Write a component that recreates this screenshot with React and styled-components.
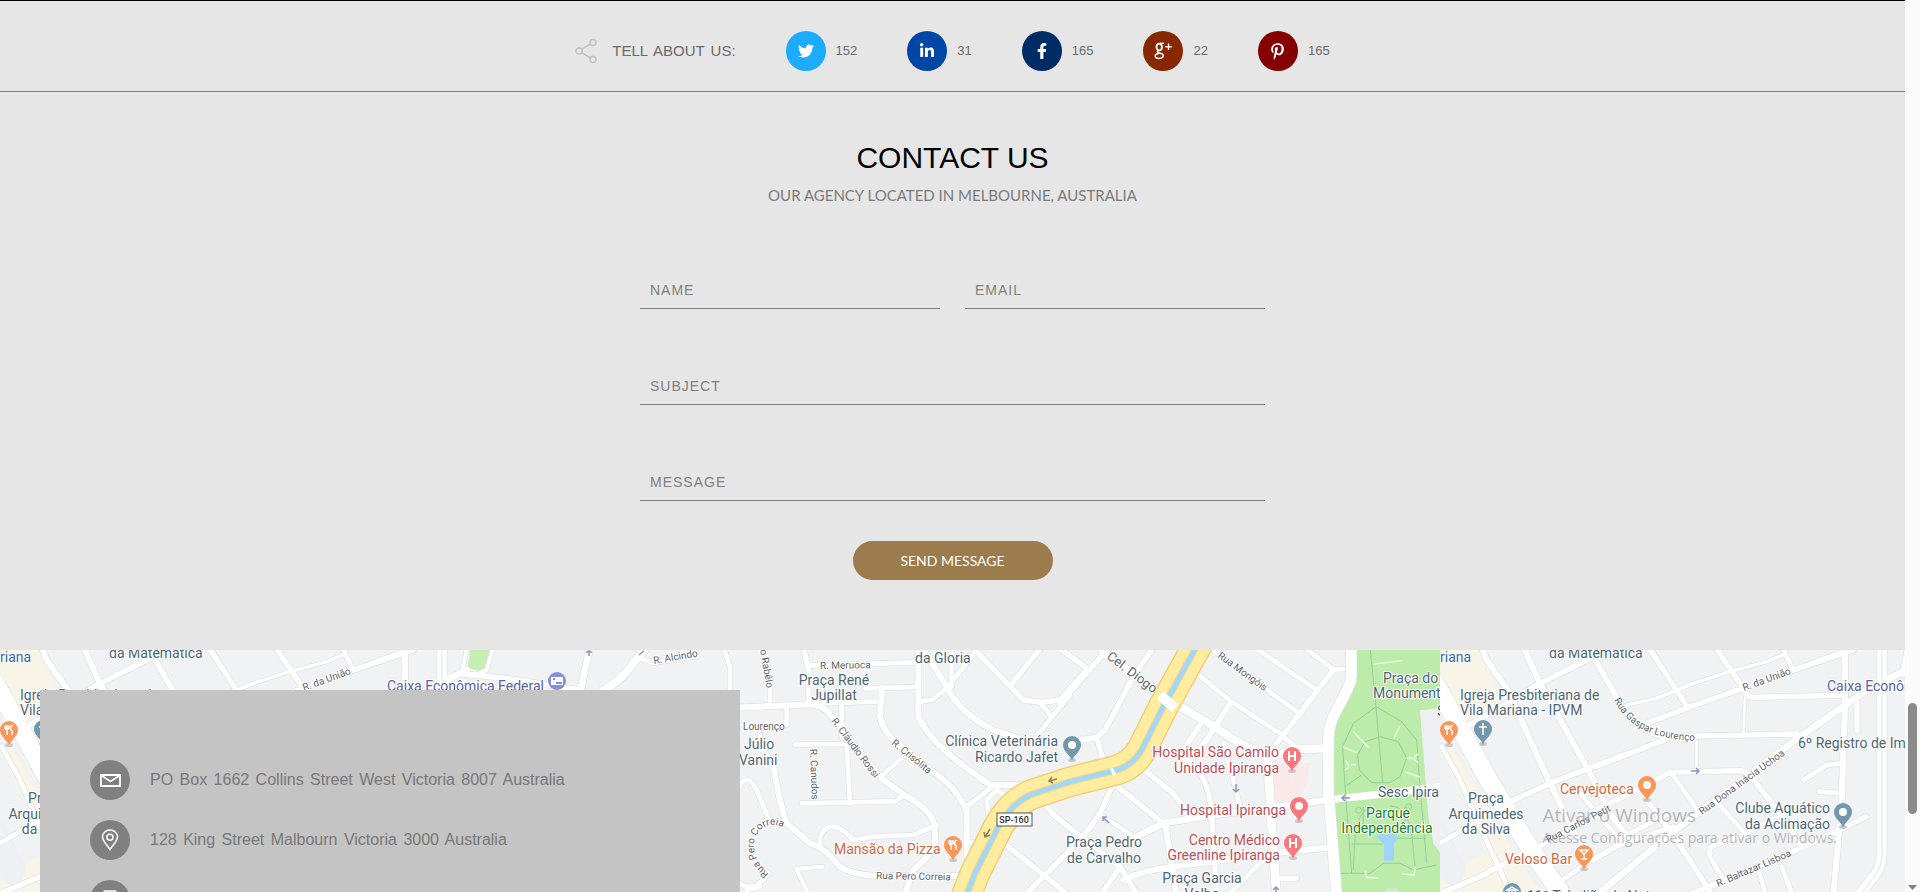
import React, { useId } from "react";
import styled, { createGlobalStyle } from "styled-components";
import { FaTwitter, FaLinkedinIn, FaFacebookF, FaPinterestP } from "react-icons/fa";

const GlobalStyle = createGlobalStyle`
  *, *::before, *::after { box-sizing: border-box; }
  body {
    margin: 0;
    background: #e6e6e6;
    color: #6b6b6b;
    font-family: "Liberation Sans", Arial, sans-serif;
  }
`;

const Shell = styled.div`
  display: flex;
  height: 100vh;
  overflow: hidden;
`;

const Page = styled.main`
  flex: 1;
  min-width: 0;
  display: flex;
  flex-direction: column;
`;

/* Share bar */

const ShareBar = styled.section`
  display: flex;
  flex: none;
  justify-content: center;
  align-items: center;
  gap: 50px;
  padding: 30px 0 20px;
  border-top: 1px solid #000;
  border-bottom: 1px solid #7d7d7d;
`;

const ShareTitle = styled.div`
  display: flex;
  align-items: center;
  gap: 15px;
  font-size: 15px;
  line-height: 20px;
  word-spacing: 2px;
`;

const ShareLink = styled.a`
  display: flex;
  align-items: center;
  gap: 10px;
  color: #6b6b6b;
  font-size: 13px;
  line-height: 20px;
  text-decoration: none;
`;

const Disc = styled.span`
  display: flex;
  flex: none;
  align-items: center;
  justify-content: center;
  width: 40px;
  height: 40px;
  border-radius: 50%;
  background: ${(p) => p.$color};
  color: #fff;
`;

/* Contact form */

const Contact = styled.section`
  display: flex;
  flex: none;
  flex-direction: column;
  align-items: center;
  padding: 48px 20px 70px;
`;

const Title = styled.h2`
  margin: 0;
  color: #000;
  font-size: 30px;
  font-weight: 400;
  line-height: 36px;
`;

const Subtitle = styled.p`
  margin: 9px 0 68px;
  color: #7b7b7b;
  font-family: "Gill Sans", "Gill Sans MT", Lato, sans-serif;
  font-size: 15px;
  line-height: 20px;
`;

const Form = styled.form`
  display: grid;
  grid-template-columns: 1fr 1fr;
  column-gap: 25px;
  row-gap: 60px;
  width: 100%;
  max-width: 625px;
`;

const Field = styled.input`
  grid-column: ${(p) => (p.$wide ? "1 / -1" : "auto")};
  width: 100%;
  height: 36px;
  padding: 8px 10px 9px;
  border: 0;
  border-bottom: 1px solid #7d7d7d;
  border-radius: 0;
  outline: 0;
  background: transparent;
  color: #333;
  font-family: inherit;
  font-size: 14px;
  letter-spacing: 1px;
  line-height: 18px;
  resize: none;
  overflow: hidden;
  &::placeholder {
    color: #808080;
    opacity: 1;
  }
`;

const SendButton = styled.button`
  grid-column: 1 / -1;
  justify-self: center;
  width: 200px;
  height: 39px;
  margin-top: -20px;
  border: 0;
  border-radius: 20px;
  background: #9c7c4c;
  color: #fff;
  font-family: "Gill Sans", "Gill Sans MT", Lato, sans-serif;
  font-size: 14px;
  line-height: 20px;
  cursor: pointer;
`;

/* Map and address card */

const MapSection = styled.section`
  position: relative;
  flex: 1;
  min-height: 0;
  overflow: hidden;
  padding: 40px;
`;

const MapLayer = styled.div`
  position: absolute;
  inset: 0;
  display: flex;
  overflow: hidden;
`;

const TileSvg = styled.svg`
  display: block;
  flex: none;
  background: #f0f2f4;
  font-family: Roboto, sans-serif;
`;

const AddressCard = styled.address`
  position: relative;
  display: flex;
  flex-direction: column;
  gap: 20px;
  width: 700px;
  max-width: 100%;
  padding: 70px 50px;
  background: #c4c4c4;
  font-style: normal;
`;

const AddressRow = styled.div`
  display: flex;
  align-items: center;
  gap: 20px;
  color: #787878;
  font-size: 16px;
  line-height: 20px;
  word-spacing: 2px;
`;

const Watermark = styled.div`
  position: absolute;
  right: 68px;
  bottom: 44px;
  color: rgba(130, 130, 130, 0.55);
  font-family: "Segoe UI", "Open Sans", sans-serif;
  font-size: 14px;
  line-height: 20px;
  pointer-events: none;
`;

const WatermarkTitle = styled.div`
  font-size: 19px;
  line-height: 26px;
`;

/* Scroll track */

const Track = styled.div`
  flex: none;
  display: grid;
  grid-template-rows: 703fr 111fr 71fr 7px;
  justify-items: center;
  width: 15px;
  background: #fbfbfb;
`;

const Thumb = styled.div`
  grid-row: 2;
  width: 9px;
  border-radius: 5px;
  background: #8b8b8b;
`;

const TrackArrow = styled.svg`
  grid-row: 4;
`;

const ShareIcon = () => (
  <svg width="22" height="26" viewBox="0 0 22 26" fill="none" stroke="#c2c2c2" strokeWidth="1.500" aria-hidden="true">
    <circle cx="4" cy="13" r="3" />
    <circle cx="18" cy="4.500" r="3" />
    <circle cx="18" cy="21.500" r="3" />
    <path d="M6.600 11.400 15.400 6M6.600 14.600 15.400 20" />
  </svg>
);

const GooglePlusIcon = () => (
  <svg width="18" height="18" viewBox="0 0 18 18" fill="none" stroke="#fff" aria-hidden="true">
    <ellipse cx="5.200" cy="5" rx="2.700" ry="3.400" strokeWidth="1.800" />
    <path d="M6 1.300H10" strokeWidth="1.400" />
    <path d="M4.500 8.500C2.700 9.500 3.200 10.600 5.200 11C8.300 11.600 9.300 12.400 9.200 13.800C9.100 15.500 7.500 16.400 5 16.400C2.500 16.400 1.200 15.500 1.200 14C1.200 12.600 2.600 11.700 4.600 11.400" strokeWidth="1.500" />
    <path d="M14.500 1.500V8M11.300 4.700H17.700" strokeWidth="1.400" />
  </svg>
);

const MailIcon = () => (
  <svg width="21" height="13" viewBox="0 0 21 13" fill="none" stroke="#fff" strokeWidth="1.800" aria-hidden="true">
    <path d="M1 1H20V12H1ZM1.500 1.500 10.500 7.500 19.500 1.500" />
  </svg>
);

const PlaceIcon = () => (
  <svg width="18" height="22" viewBox="0 0 18 22" fill="none" stroke="#fff" strokeWidth="1.500" aria-hidden="true">
    <path d="M9 20.500C6 15.500 1.500 12 1.500 8A7.500 7 0 0 1 16.500 8C16.500 12 12 15.500 9 20.500Z" />
    <circle cx="9" cy="8.300" r="3" />
  </svg>
);

const PhoneIcon = () => (
  <svg width="14" height="20" viewBox="0 0 14 20" fill="none" stroke="#fff" strokeWidth="1.600" aria-hidden="true">
    <rect x="1" y="1" width="12" height="18" rx="1" />
    <path d="M1 15H13" />
  </svg>
);

/* Street geometry is plotted on a grid three times finer than the tile;
   each district carries its own origin and a list of [stroke width, path]. */

const districts = [
  {
    origin: -120,
    roads: [
      [55, "M340 120 440 300 500 410 620 610 730 770"],
      [18, "M485 20 500 60 560 145 690 430 770 590"],
      [18, "M610 20 660 130 810 400 870 520 930 600"],
      [16, "M820 50 900 190"],
      [16, "M440 260 560 190 660 130 800 60 850 30"],
      [16, "M560 490 690 430 910 345"],
      [14, "M350 615 480 540 560 490"],
      [14, "M365 320 420 420 480 560 540 690 575 770"],
      [16, "M350 765 480 710 610 640"],
      [14, "M620 640 750 570 850 520"],
      [14, "M720 725 800 670 920 600"],
    ],
  },
  {
    origin: 160,
    roads: [
      [16, "M-20 50 50 170C80 230 140 290 210 290L590 282"],
      [16, "M-10 378 200 298"],
      [16, "M145 20 265 205"],
      [16, "M345 20 430 145Q438 170 460 172L730 166"],
      [14, "M545 20 580 90"],
      [10, "M80 195 170 175 280 130 390 95 500 65 560 40"],
      [16, "M140 250 270 200 430 145 580 90 760 30"],
      [18, "M735 20V200L725 480 700 770"],
      [20, "M-10 765 220 575 400 440 600 290 800 150 920 90"],
      [8, "M435 170 431 278"],
      [16, "M771 188V272"],
      [8, "M290 305V390"],
      [16, "M-30 520 120 445 210 397 420 392Q445 396 455 412L540 520 600 610"],
      [14, "M-60 460 60 600 70 590 200 525"],
      [16, "M140 480 220 585 340 770"],
      [14, "M215 400 300 520M355 490 430 575"],
      [16, "M200 790 340 735 600 625 720 570 798 530"],
      [14, "M370 720 330 650Q322 625 345 615L430 585 550 520"],
      [14, "M-20 660 70 610 220 560"],
      [14, "M612 420 680 375 722 370M657 455 715 459"],
      [14, "M545 680 580 770M475 690 500 770"],
      [30, "M845 20V640Q845 680 825 705L770 775"],
    ],
  },
  {
    origin: 380,
    roads: [
      [14, "M-20 68 110 20M72 40V150"],
      [12, "M262 20 245 100 275 110 320 90 340 20"],
      [16, "M240 100 400 118 600 150"],
      [20, "M630 20 600 160"],
      [24, "M800 20 740 95Q710 130 670 150"],
      [14, "M780 55 820 68 940 50"],
      [14, "M1030 20 1050 80V160"],
    ],
  },
  {
    origin: 740,
    roads: [
      [18, "M-20 203 220 193Q260 200 290 250L420 412 500 470Q585 515 585 570V610Q580 640 520 690L492 770"],
      [14, "M90 130V200M140 200V255M60 285V325"],
      [16, "M190 20 208 100 205 190"],
      [14, "M205 77 530 67M375 145 530 141M220 190 410 185"],
      [18, "M425 145V190Q405 230 450 290L570 390Q640 430 680 510V680"],
      [18, "M535 20V230Q560 290 660 370L750 435 870 435"],
      [14, "M305 190V290M320 312 330 490M165 314 325 312M185 490 465 484 485 470M420 412 490 350"],
      [14, "M535 185 575 180 620 145 710 30M635 20V140"],
      [18, "M545 20 620 140Q660 220 760 270L880 310"],
      [16, "M695 20 850 180 905 187 960 180 1040 90M905 20 810 138"],
      [14, "M900 187 930 225M990 165 880 300"],
      [18, "M60 320 100 370Q115 480 140 550L210 610Q250 620 290 670 320 705 420 708L650 708"],
      [14, "M-15 470Q15 380 50 450L90 545M-15 720Q40 770 85 700M20 750 60 740"],
      [14, "M240 620Q235 560 285 560 300 560 340 600L400 590 520 585 590 555"],
      [12, "M168 686 248 680M168 686 210 770"],
      [14, "M680 500 760 438M745 520 740 480 770 450 830 490M690 606 720 606"],
      [16, "M780 600 930 720 990 770M910 480Q920 510 990 565"],
    ],
  },
  {
    origin: 1060,
    roads: [
      [24, "M130 35 300 165 430 240 540 310 630 350"],
      [16, "M0 25 80 85M150 20 0 190M280 20 215 120 135 270 110 292 60 300M110 290 132 370"],
      [14, "M405 95 510 182 660 280 710 325M460 30 710 215"],
      [14, "M580 20 770 150M730 20 820 88 850 87"],
      [16, "M820 90 650 310M510 190 440 300 400 350M420 255 370 330"],
      [16, "M290 310 400 370Q450 430 455 520L470 770"],
      [16, "M240 380 340 460 370 500M160 430 310 550M160 430 120 520 70 590-100 760"],
      [16, "M-20 525 180 680 235 770M180 680 120 770"],
      [20, "M220 595 310 550 460 525 620 505 800 480"],
      [18, "M315 550 350 770M190 720Q250 690 340 680L640 640 810 622"],
      [26, "M622 340 635 560 650 770"],
      [24, "M640 350 700 328 800 325"],
      [32, "M874 20V110Q870 140 835 200 805 250 805 300V450L830 770"],
      [14, "M500 770 610 660M650 715H710M492 310 540 500M130 530 230 595"],
    ],
  },
];

const place = (origin) => `translate(${origin} -10) scale(0.33333)`;

const highway = "M-290 790-255 700-200 590Q-160 500-90 465L30 425 160 393Q215 380 245 330L310 200 415 10";

const areaLabels = [
  ["riana", 0, 12, "start", "#3a66b0"],
  ["da Matemática", 109, 8],
  ["Igreja Presbiteriana de", 20, 50],
  ["Vila Mariana - IPVM", 20, 65],
  ["Praça", 46, 153, "middle"],
  ["Arquimedes", 46, 169, "middle"],
  ["da Silva", 46, 184, "middle"],
  ["Cervejoteca", 120, 144, "start", "#d0683c"],
  ["Veloso Bar", 65, 214, "start", "#d0683c"],
  ["11º Tabelião de Notas", 87, 251],
  ["Caixa Econômica Federal", 387, 41, "start", "#5961a8"],
  ["6º Registro de Imóveis", 358, 98],
  ["Clube Aquático", 390, 163, "end"],
  ["da Aclimação", 390, 179, "end"],
  ["Praça René", 834, 35, "middle"],
  ["Jupillat", 834, 50, "middle"],
  ["da Gloria", 915, 13],
  ["Júlio", 744, 99],
  ["Vanini", 739, 115],
  ["Clínica Veterinária", 1058, 96, "end"],
  ["Ricardo Jafet", 1058, 112, "end"],
  ["Mansão da Pizza", 834, 204, "start", "#d0683c"],
  ["Hospital São Camilo", 1279, 107, "end", "#bc4d55"],
  ["Unidade Ipiranga", 1279, 123, "end", "#bc4d55"],
  ["Hospital Ipiranga", 1286, 165, "end", "#bc4d55"],
  ["Centro Médico", 1280, 195, "end", "#bc4d55"],
  ["Greenline Ipiranga", 1280, 210, "end", "#bc4d55"],
  ["Praça Pedro", 1104, 197, "middle"],
  ["de Carvalho", 1104, 213, "middle"],
  ["Praça Garcia", 1202, 233, "middle"],
  ["Velho", 1202, 249, "middle"],
  ["Praça do", 1383, 33],
  ["Monumento", 1373, 48],
  ["S", 1437, 66],
  ["Sesc Ipiranga", 1378, 147],
  ["Parque", 1388, 168, "middle", "#17811d"],
  ["Independência", 1387, 183, "middle", "#17811d"],
];

const streetLabels = [
  ["R. da União", 304, 41, -20],
  ["Rua Dona Inácia Uchoa", 262, 165, -36],
  ["R. Baltazar Lisboa", 278, 237, -23],
  ["Rua Carlos Petit", 108, 193, -27],
  ["R. Alcindo", 654, 14, -10],
  ["o Rabêlo", 760, 0, 80],
  ["R. Meruoca", 820, 19, -1],
  ["Lourenço", 743, 80, 0],
  ["R. Cláudio Rossi", 831, 71, 53],
  ["R. Crisólita", 891, 94, 39],
  ["R. Canudos", 810, 99, 88],
  ["Rua Pero Correia", 876, 229, 1],
  ["Rua Mongóis", 1217, 7, 36],
];

const pins = [
  [9, 80, "#fb9658", "fork"],
  [43, 79, "#7398ac", "cross"],
  [144, 204, "#fb9658", "glass"],
  [72, 242, "#7398ac", "hall"],
  [207, 135, "#fb9658", "dot"],
  [403, 162, "#7398ac", "dot"],
  [1072, 95, "#7398ac", "dot"],
  [953, 195, "#fb9658", "fork"],
  [1292, 106, "#f8787c", "ward"],
  [1299, 156, "#f8787c", "dot"],
  [1293, 193, "#f8787c", "ward"],
];

const pinMarks = {
  dot: <circle r="4" fill="#fff" stroke="none" />,
  fork: <path d="M-4-5V-1M-2-5V-1M0-5V-1M-4-1H0M-2-1V5M4-5C1-4 1 0 3 1V5" />,
  cross: <path d="M0-6V6M-4-2H4" />,
  glass: <path d="M-4-4H4L0 0ZM0 0V5M-3 5H3" />,
  hall: <path d="M-5-2H5L0-5ZM-3-1V3M0-1V3M3-1V3" />,
  ward: <path d="M-3-5V5M3-5V5M-3 0H3" strokeWidth="2" />,
};

function Pin({ x, y, color, mark }) {
  return (
    <g transform={`translate(${x} ${y})`}>
      <ellipse cy="15" rx="4" ry="2" fill="#c9c9c9" />
      <path d="M0 16C-1 10-9 7-9 0A9 9 0 0 1 9 0C9 7 1 10 0 16Z" fill={color} />
      <g fill="none" stroke="#fff" strokeWidth="1.500">{pinMarks[mark]}</g>
    </g>
  );
}

function MapTile() {
  const id = useId();
  const halo = { stroke: "#fff", strokeWidth: 2, strokeLinejoin: "round", paintOrder: "stroke" };
  return (
    <TileSvg width="1440" height="640" viewBox="0 0 1440 640" aria-hidden="true">
      <defs>
        <path id={`${id}a`} d="M174 50C186 74 208 90 262 91" />
        <path id={`${id}b`} d="M769 224C750 208 751 188 761 179C769 173 779 173 790 182" />
      </defs>
      <g transform={place(-120)} fill="#f8f4e8">
        <path d="M360 30H482L500 90 520 110 535 180 450 260 360 110Z" />
        <path d="M370 340 390 315 480 460 590 650 670 770H360V700L500 640 470 550 360 330Z" />
      </g>
      <path d="M0 163V228L18 240 26 217Z" fill="#eef0f4" />
      <path d="M470 0H490L484 22 468 18Z" fill="#c6edb4" />
      <path d="M1271 113H1310L1306 135 1299 149 1273 153Z" fill="#fae9e9" />
      <g transform={place(1320)}>
        <path d="M360 200 300 210 315 400 330 600 360 640Z" fill="#eeeff2" />
        <path d="M110 20V130L45 260 35 450 50 770H362V640L340 610 325 530 315 400 300 210 362 205V20Z" fill="#bcebaa" />
        <path d="M35 478 190 462 362 440" fill="none" stroke="#fff" strokeWidth="22" />
        <g fill="none" stroke="#94cf9b" strokeWidth="3">
          <path d="M150 20 168 200 188 430M168 200 100 250 68 320 75 440 95 700M168 200 245 245 290 300 300 440 320 670" />
          <path d="M180 290 235 305 260 355 240 410 210 428H155L118 390 113 345 135 305ZM75 440 125 405" />
          <path d="M155 500C100 520 105 600 100 690M210 498C280 500 275 600 285 680M130 500V570M255 500V570M95 612H190M230 595H320M60 700 150 700 190 670H240L280 690 350 675" />
          <circle cx="116" cy="511" r="9" />
          <circle cx="266" cy="500" r="9" />
        </g>
        <g fill="none" stroke="#e4f7dc" strokeWidth="5">
          <path d="M100 275 145 322M240 258 222 295M68 320 110 338M255 395 300 412M75 360Q95 380 75 390M92 374H108M295 342Q270 355 295 368M260 355H278M160 72 248 62M135 690 140 712 175 714M285 680 282 705 245 702" />
        </g>
        <path d="M168 590Q200 570 236 590L222 612V662H192V612Z" fill="#a2d4fb" />
        <path d="M200 745H235V765H200Z" fill="#d8e7cf" />
      </g>
      {districts.map((d) => (
        <g key={`edge${d.origin}`} transform={place(d.origin)} fill="none" stroke="#dfe1e3" strokeLinecap="round" strokeLinejoin="round">
          {d.roads.map(([w, path]) => <path key={path} d={path} strokeWidth={w + 4} />)}
        </g>
      ))}
      {districts.map((d) => (
        <g key={`road${d.origin}`} transform={place(d.origin)} fill="none" stroke="#fff" strokeLinecap="round" strokeLinejoin="round">
          {d.roads.map(([w, path]) => <path key={path} d={path} strokeWidth={w} />)}
        </g>
      ))}
      <path d="M442 0V205Q442 216 436 224L420 246" fill="none" stroke="#e2e4e6" strokeWidth="1" />
      <g transform={place(1060)} fill="none">
        <path d={highway} stroke="#f3cc72" strokeWidth="92" />
        <path d={highway} stroke="#feeda0" strokeWidth="84" />
        <path d={highway} stroke="#f6d98a" strokeWidth="22" />
        <path d={highway} stroke="#a4d6f5" strokeWidth="15" />
        <path d="M300 165 345 205" stroke="#fff" strokeWidth="30" />
        <path d="M154 385 164 405" stroke="#fff" strokeWidth="9" />
      </g>
      <g stroke="#8f93c4" strokeWidth="1.500" fill="none">
        <path d="M251 121H259M256 118 259 121 256 124M1350 148H1342M1345 145 1342 148 1345 151M1236 134V142M1233 139 1236 142 1239 139M1109 173 1103 167M1103 171V167H1107M1276 242V237M1273 240 1276 237 1279 240M586 2H592M589 0V6M639 5 644 1" />
      </g>
      <g stroke="#8f8152" strokeWidth="1.500" fill="none">
        <path d="M1057 129 1049 131M1052 127 1049 131 1053 133M990 179 985 187M984 182 985 187 990 185" />
      </g>
      <g fill="#5f6366" fontSize="10" {...halo}>
        {streetLabels.map(([text, x, y, turn]) => (
          <text key={text} transform={`translate(${x} ${y}) rotate(${turn})`}>{text}</text>
        ))}
        <text><textPath href={`#${id}a`}>Rua Gaspar Lourenço</textPath></text>
        <text><textPath href={`#${id}b`}>Rua Pero Correia</textPath></text>
        <text fontSize="13" transform="translate(1106 8) rotate(37)">Cel. Diogo</text>
      </g>
      <rect x="997" y="163" width="35" height="13" fill="#fff" stroke="#555" />
      <text x="1014" y="173" fontSize="9" fontWeight="500" fill="#333" textAnchor="middle">SP-160</text>
      <circle cx="557" cy="31" r="9" fill="#8390dc" />
      <rect x="551" y="27" width="12" height="8" fill="#fff" />
      <path d="M553 29H555M556 33H562" stroke="#8390dc" strokeWidth="2" />
      {pins.map(([x, y, color, mark]) => <Pin key={`${x}-${y}`} x={x} y={y} color={color} mark={mark} />)}
      <g fontSize="14" {...halo}>
        {areaLabels.map(([text, x, y, anchor = "start", color = "#4c6674"]) => (
          <text key={text + x} x={x} y={y} textAnchor={anchor} fill={color}>{text}</text>
        ))}
      </g>
    </TileSvg>
  );
}

const networks = [
  { name: "Twitter", color: "#1dabff", count: 152, icon: <FaTwitter size={16} /> },
  { name: "LinkedIn", color: "#0046a4", count: 31, icon: <FaLinkedinIn size={16} /> },
  { name: "Facebook", color: "#002c66", count: 165, icon: <FaFacebookF size={16} /> },
  { name: "Google Plus", color: "#872800", count: 22, icon: <GooglePlusIcon /> },
  { name: "Pinterest", color: "#850000", count: 165, icon: <FaPinterestP size={17} /> },
];

export default function App() {
  return (
    <Shell>
      <GlobalStyle />
      <Page>
        <ShareBar>
          <ShareTitle>
            <ShareIcon />
            TELL ABOUT US:
          </ShareTitle>
          {networks.map((n) => (
            <ShareLink key={n.name} href="#share" aria-label={`${n.name} ${n.count}`}>
              <Disc $color={n.color}>{n.icon}</Disc>
              {n.count}
            </ShareLink>
          ))}
        </ShareBar>

        <Contact>
          <Title>CONTACT US</Title>
          <Subtitle>OUR AGENCY LOCATED IN MELBOURNE, AUSTRALIA</Subtitle>
          <Form onSubmit={(e) => e.preventDefault()}>
            <Field type="text" placeholder="NAME" aria-label="Name" />
            <Field type="email" placeholder="EMAIL" aria-label="Email" />
            <Field $wide type="text" placeholder="SUBJECT" aria-label="Subject" />
            <Field $wide as="textarea" rows={1} placeholder="MESSAGE" aria-label="Message" />
            <SendButton type="submit">SEND MESSAGE</SendButton>
          </Form>
        </Contact>

        <MapSection>
          <MapLayer>
            <MapTile />
            <MapTile />
          </MapLayer>
          <AddressCard>
            <AddressRow>
              <Disc $color="#808080"><MailIcon /></Disc>
              PO Box 1662 Collins Street West Victoria 8007 Australia
            </AddressRow>
            <AddressRow>
              <Disc $color="#808080"><PlaceIcon /></Disc>
              128 King Street Malbourn Victoria 3000 Australia
            </AddressRow>
            <AddressRow>
              <Disc $color="#808080"><PhoneIcon /></Disc>
            </AddressRow>
          </AddressCard>
          <Watermark>
            <WatermarkTitle>Ativar o Windows</WatermarkTitle>
            Acesse Configurações para ativar o Windows.
          </Watermark>
        </MapSection>
      </Page>
      <Track aria-hidden="true">
        <Thumb />
        <TrackArrow width="9" height="5" viewBox="0 0 9 5">
          <path d="M0 0H9L4.500 5Z" fill="#7d7d7d" />
        </TrackArrow>
      </Track>
    </Shell>
  );
}
